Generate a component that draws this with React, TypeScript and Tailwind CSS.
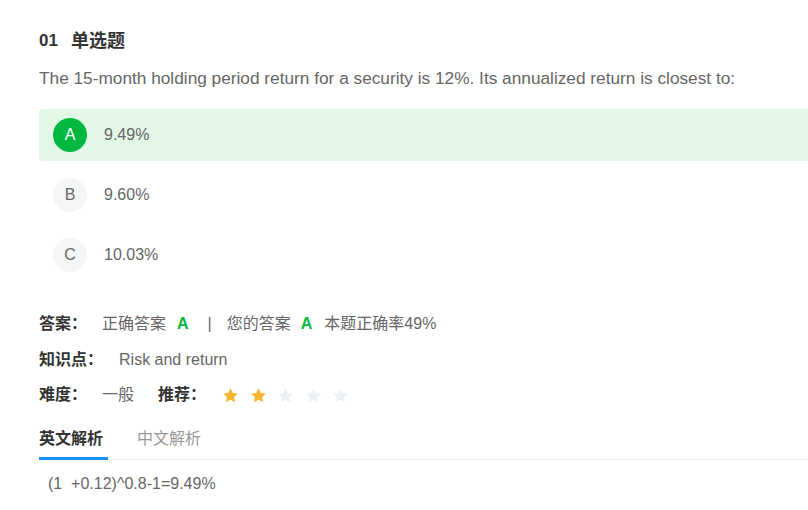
import React from "react";

const Star = ({ on }: { on: boolean }) => (
  <svg width="17" height="17" viewBox="0 0 24 24" className="shrink-0">
    <path
      d="M12 1.8l3.1 6.6 7.2.9-5.3 5 1.4 7.1L12 17.9l-6.4 3.5 1.4-7.1-5.3-5 7.2-.9z"
      fill={on ? "#f7b52c" : "#edf0f5"}
    />
  </svg>
);

const Option = ({ letter, text, correct }: { letter: string; text: string; correct?: boolean }) => (
  <div
    className={
      "flex items-center h-[52px] pl-[14px] rounded-l-[4px] " +
      (correct ? "bg-[#e3f7e6]" : "bg-white")
    }
  >
    <div
      className={
        "w-[34px] h-[34px] rounded-full flex items-center justify-center text-[16px] " +
        (correct ? "bg-[#00b83f] text-white" : "bg-[#f4f5f7] text-[#666]")
      }
    >
      {letter}
    </div>
    <div className="ml-[17px] text-[16px] text-[#666]">{text}</div>
  </div>
);

export default function App() {
  return (
    <div
      className="w-full overflow-hidden bg-white pl-[39px] text-[#333] leading-[24px]"
      style={{ fontFamily: '"Liberation Sans", Arial, "Noto Sans CJK SC", sans-serif' }}
    >
      <div className="pt-[29px] flex text-[17px] font-bold text-[#333]">
        <span>01</span>
        <span className="ml-[13px] text-[18px]">单选题</span>
      </div>
      <div className="mt-[13px] text-[17.25px] text-[#666] whitespace-nowrap">
        The 15-month holding period return for a security is 12%. Its annualized return is closest to:
      </div>
      <div className="mt-[19px] flex flex-col gap-[8px]">
        <Option letter="A" text="9.49%" correct />
        <Option letter="B" text="9.60%" />
        <Option letter="C" text="10.03%" />
      </div>

      <div className="mt-[31px] flex items-center text-[16px] whitespace-nowrap">
        <span className="font-bold text-[#333]">答案：</span>
        <span className="ml-[15px] text-[#666]">正确答案</span>
        <span className="ml-[11px] font-bold text-[#00b83f]">A</span>
        <span className="ml-[19px] text-[#666]">|</span>
        <span className="ml-[15px] text-[#666]">您的答案</span>
        <span className="ml-[10px] font-bold text-[#00b83f]">A</span>
        <span className="ml-[12px] text-[#666]">本题正确率49%</span>
      </div>
      <div className="mt-[12px] flex items-center text-[16px]">
        <span className="font-bold text-[#333]">知识点：</span>
        <span className="ml-[16px] text-[#666]">Risk and return</span>
      </div>
      <div className="mt-[11px] flex items-center text-[16px]">
        <span className="font-bold text-[#333]">难度：</span>
        <span className="ml-[15px] text-[#666]">一般</span>
        <span className="ml-[24px] font-bold text-[#333]">推荐：</span>
        <div className="ml-[16px] flex items-center gap-[10.5px]">
          <Star on />
          <Star on />
          <Star on={false} />
          <Star on={false} />
          <Star on={false} />
        </div>
      </div>

      <div className="mt-[20px] flex border-b border-[#e4e7ed] text-[16px]">
        <div className="mb-[-1px] pb-[6px] border-b-[3px] border-[#1890ff] font-bold text-[#333] w-[69px]">
          英文解析
        </div>
        <div className="ml-[29px] mb-[-1px] pb-[6px] text-[#999]">中文解析</div>
      </div>
      <div className="mt-[12px] pl-[9px] text-[16px] text-[#666] pb-[20px]">
        (1&nbsp;&nbsp;+0.12)^0.8-1=9.49%
      </div>
    </div>
  );
}
